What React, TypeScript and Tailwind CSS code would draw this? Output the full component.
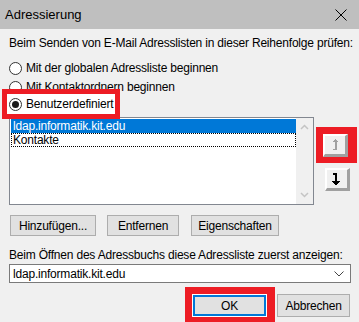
import React from "react";

const font = { fontFamily: '"Liberation Sans", Arial, sans-serif' };

function Radio({ checked, label }: { checked?: boolean; label: string }) {
  return (
    <div className="flex items-center h-[16px]">
      <div className="w-[13px] h-[13px] rounded-full border border-[#333333] bg-white flex items-center justify-center">
        {checked && <div className="w-[7px] h-[7px] rounded-full bg-[#1a1a1a]" />}
      </div>
      <span className="ml-[4px] text-[12px] leading-[16px] text-black">{label}</span>
    </div>
  );
}

function Btn({ children, w, className = "" }: { children: React.ReactNode; w: string; className?: string }) {
  return (
    <div className={`h-[21px] ${w} bg-[#e1e1e1] border border-[#adadad] flex items-center justify-center text-[12px] text-black ${className}`}>
      {children}
    </div>
  );
}

function ArrowIcon({ up, color }: { up?: boolean; color: string }) {
  return (
    <svg width="9" height="12" viewBox="0 0 9 12" shapeRendering="crispEdges">
      {up ? (
        <g fill={color}>
          <rect x="4" y="0" width="1" height="1" />
          <rect x="3" y="1" width="3" height="1" />
          <rect x="2" y="2" width="5" height="1" />
          <rect x="4" y="3" width="2" height="8" />
          <rect x="2" y="10" width="2" height="1" />
        </g>
      ) : (
        <g fill={color}>
          <rect x="1" y="0" width="3" height="2" />
          <rect x="3" y="0" width="2" height="8" />
          <rect x="0" y="8" width="8" height="1" />
          <rect x="1" y="9" width="6" height="1" />
          <rect x="2" y="10" width="4" height="1" />
          <rect x="3" y="11" width="2" height="1" />
        </g>
      )}
    </svg>
  );
}

function Btn3d({ children }: { children: React.ReactNode }) {
  return (
    <div className="w-[25px] h-[23px] bg-[#f0f0f0] border-t-2 border-l-2 border-t-white border-l-white border-b-[3px] border-r-[3px] border-b-[#a0a0a0] border-r-[#a0a0a0] flex items-center justify-center">
      {children}
    </div>
  );
}

export default function App() {
  return (
    <div className="w-[359px] h-[322px] bg-[#f0f0f0] overflow-hidden relative tracking-[-0.2px]" style={font}>
      {/* Title bar */}
      <div className="h-[29px] bg-[#bfbfbf] flex items-center justify-between pl-[5px] pr-[12px]">
        <span className="text-[13px] text-black tracking-normal">Adressierung</span>
        <svg width="12" height="12" viewBox="0 0 12 12">
          <path d="M0.5 0.5 L11.5 11.5 M11.5 0.5 L0.5 11.5" stroke="#000" strokeWidth="1" />
        </svg>
      </div>

      <div className="px-[9px] flex flex-col">
        <div className="mt-[6px] text-[12px] leading-[16px] text-black whitespace-nowrap">
          Beim Senden von E-Mail Adresslisten in dieser Reihenfolge prüfen:
        </div>
        <div className="mt-[9px]">
          <Radio label="Mit der globalen Adressliste beginnen" />
        </div>
        <div className="mt-[3px]">
          <Radio label="Mit Kontaktordnern beginnen" />
        </div>
        <div className="mt-[1px] relative">
          <div className="absolute left-[-7px] top-[-7px] w-[118px] h-[30px] border-[5px] border-[#ed1c24] bg-white" />
          <div className="relative">
            <Radio checked label="Benutzerdefiniert" />
          </div>
        </div>

        {/* list + arrows */}
        <div className="mt-[5px] flex">
          <div className="w-[309px] h-[88px] bg-white border border-[#828790] flex">
            <div className="flex-1 pt-[1px] pl-[1px]">
              <div className="h-[14px] bg-[#0078d7] text-white text-[12px] leading-[14px] pl-[2px]">
                ldap.informatik.kit.edu
              </div>
              <div className="h-[14px] border border-dotted border-black text-black text-[12px] leading-[12px] pl-[1px]">
                Kontakte
              </div>
            </div>
            <div className="w-[17px] bg-[#f0f0f0] flex flex-col items-center justify-between py-[6px]">
              <svg width="9" height="6" viewBox="0 0 9 6">
                <path d="M1 5 L4.5 1.5 L8 5" stroke="#c4c4c4" strokeWidth="1.5" fill="none" />
              </svg>
              <svg width="9" height="6" viewBox="0 0 9 6">
                <path d="M1 1 L4.5 4.5 L8 1" stroke="#c4c4c4" strokeWidth="1.5" fill="none" />
              </svg>
            </div>
          </div>
          <div className="flex flex-col items-center ml-[9px] pt-[17px]">
            <div className="relative">
              <div className="absolute left-[-7px] top-[-7px] w-[41px] h-[36px] bg-[#ed1c24]" />
              <div className="relative w-[27px]">
                <Btn3d>
                  <ArrowIcon up color="#a0a0a0" />
                </Btn3d>
              </div>
            </div>
            <div className="mt-[11px] ml-[1px]">
              <Btn3d>
                <ArrowIcon color="#000" />
              </Btn3d>
            </div>
          </div>
        </div>

        {/* buttons */}
        <div className="mt-[10px] flex ml-[1px]">
          <Btn w="w-[86px]">Hinzufügen...</Btn>
          <Btn w="w-[72px]" className="ml-[11px]">Entfernen</Btn>
          <Btn w="w-[88px]" className="ml-[12px]">Eigenschaften</Btn>
        </div>

        <div className="mt-[11px] text-[12px] leading-[16px] text-black whitespace-nowrap">
          Beim Öffnen des Adressbuchs diese Adressliste zuerst anzeigen:
        </div>
        <div className="mt-[1px] w-[342px] h-[19px] bg-white border border-[#7a7a7a] flex items-center justify-between pl-[3px] pr-[6px] text-[12px] text-black">
          <span>ldap.informatik.kit.edu</span>
          <svg width="10" height="6" viewBox="0 0 10 6">
            <path d="M0.5 0.5 L5 5 L9.5 0.5" stroke="#444" strokeWidth="1" fill="none" />
          </svg>
        </div>

        <div className="mt-[11px] flex justify-end pr-[0px]">
          <div className="relative">
            <div className="absolute left-[-7px] top-[-7px] w-[90px] h-[40px] bg-[#ed1c24]" />
            <div className="relative w-[75px] h-[23px] bg-white p-[1px]">
              <div className="w-full h-full bg-[#e1e1e1] border-2 border-[#0078d7] flex items-center justify-center text-[12px] text-black">
                OK
              </div>
            </div>
          </div>
          <div className="ml-[10px] mr-[0px] w-[73px] h-[23px] bg-[#e1e1e1] border border-[#adadad] flex items-center justify-center text-[12px] text-black">
            Abbrechen
          </div>
        </div>
      </div>
    </div>
  );
}
